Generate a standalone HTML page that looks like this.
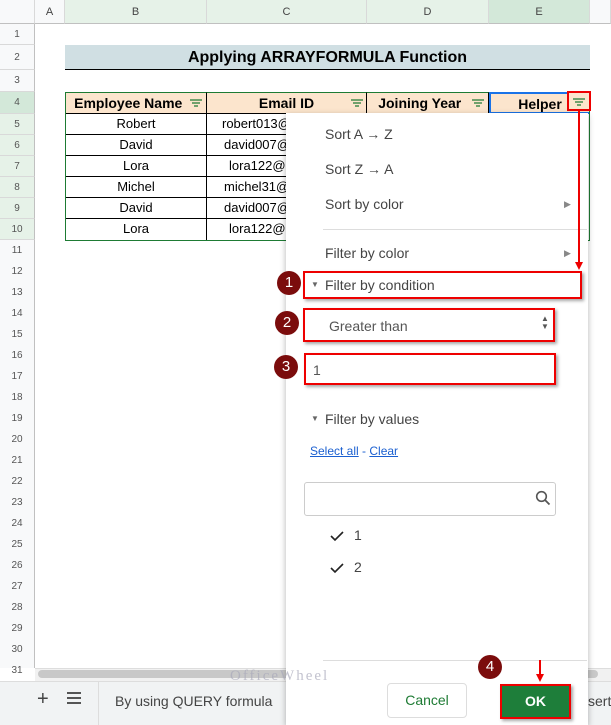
<!DOCTYPE html>
<html><head><style>
*{margin:0;padding:0;box-sizing:border-box}
body{width:611px;height:725px;overflow:hidden;background:#fff;font-family:"Liberation Sans",Arial,sans-serif;position:relative}
.a{position:absolute}
.ch{top:0;height:24px;background:#f8f9fa;border-right:1px solid #d9d9d9;border-bottom:1px solid #c0c0c0;font-size:11px;color:#444;text-align:center;line-height:24px}
.rh{left:0;width:35px;background:#f8f9fa;border-bottom:1px solid #d9d9d9;border-right:1px solid #c0c0c0;font-size:10px;color:#555;text-align:center}
.cell{border-right:1px solid #000;border-bottom:1px solid #000;font-size:13px;text-align:center;line-height:20px;color:#000}
.hd{background:#fce5cd;font-weight:bold;font-size:14px;line-height:21px}
.mi{left:325px;font-size:14px;color:#444}
.rb{border:2px solid #e00;box-shadow:2px 2px 3px rgba(0,0,0,.35)}
.num{width:24px;height:24px;border-radius:50%;background:#7b0c0c;color:#fff;font-size:15px;text-align:center;line-height:24px}
.flt{width:14px;height:9px}
</style></head><body>
<!-- column headers -->
<div class="a ch" style="left:0;width:35px"></div>
<div class="a ch" style="left:35px;width:30px">A</div>
<div class="a ch" style="left:65px;width:142px;background:#e6f2e8">B</div>
<div class="a ch" style="left:207px;width:160px;background:#e6f2e8">C</div>
<div class="a ch" style="left:367px;width:122px;background:#e6f2e8">D</div>
<div class="a ch" style="left:489px;width:101px;background:#d3e8d9">E</div>
<div class="a ch" style="left:590px;width:21px"></div>
<!-- row headers -->
<div class="a rh" style="top:24px;height:21px;line-height:21px">1</div>
<div class="a rh" style="top:45px;height:25px;line-height:25px;background:#f8f9fa">2</div>
<div class="a rh" style="top:70px;height:22px;line-height:22px">3</div>
<div class="a rh" style="top:92px;height:22px;line-height:22px;background:#d3e8d9">4</div>
<div class="a rh" style="top:114px;height:21px;line-height:21px;background:#e6f2e8">5</div>
<div class="a rh" style="top:135px;height:21px;line-height:21px;background:#e6f2e8">6</div>
<div class="a rh" style="top:156px;height:21px;line-height:21px;background:#e6f2e8">7</div>
<div class="a rh" style="top:177px;height:21px;line-height:21px;background:#e6f2e8">8</div>
<div class="a rh" style="top:198px;height:21px;line-height:21px;background:#e6f2e8">9</div>
<div class="a rh" style="top:219px;height:21px;line-height:21px;background:#e6f2e8">10</div>
<div class="a" style="left:0;top:240px;width:35px;height:428px;background:#f8f9fa;border-right:1px solid #c0c0c0;font-size:10px;color:#555;text-align:center;line-height:21px">11<br>12<br>13<br>14<br>15<br>16<br>17<br>18<br>19<br>20<br>21<br>22<br>23<br>24<br>25<br>26<br>27<br>28<br>29<br>30<br>31</div>
<!-- title -->
<div class="a" style="left:65px;top:45px;width:525px;height:25px;background:#d0dfe3;border-bottom:1px solid #000;font-weight:bold;font-size:16px;text-align:center;line-height:25px">Applying ARRAYFORMULA Function</div>
<!-- table -->
<div class="a" style="left:65px;top:92px;width:525px;height:149px;border:1px solid #1e7b34"></div>
<div class="a cell hd" style="left:66px;top:92px;width:141px;height:22px;border-top:1px solid #1e7b34">Employee Name&nbsp;&nbsp;&nbsp;&nbsp;</div>
<div class="a cell hd" style="left:207px;top:92px;width:160px;height:22px;border-top:1px solid #1e7b34">Email ID</div>
<div class="a cell hd" style="left:367px;top:92px;width:122px;height:22px;border-top:1px solid #1e7b34">Joining Year&nbsp;&nbsp;&nbsp;&nbsp;</div>
<div class="a cell hd" style="left:489px;top:92px;width:100px;height:22px;border:2px solid #1a73e8;border-right:none">Helper</div>
<svg class="a" style="left:189px;top:98px" width="14" height="10"><path d="M1 2h12M3 5h8M5 8h4" stroke="#1e7b34" stroke-width="1.3"/></svg>
<svg class="a" style="left:350px;top:98px" width="14" height="10"><path d="M1 2h12M3 5h8M5 8h4" stroke="#1e7b34" stroke-width="1.3"/></svg>
<svg class="a" style="left:471px;top:98px" width="14" height="10"><path d="M1 2h12M3 5h8M5 8h4" stroke="#1e7b34" stroke-width="1.3"/></svg>
<div class="a" style="left:567px;top:91px;width:24px;height:20px;border:2px solid #e00;background:#fce5cd"></div>
<svg class="a" style="left:572px;top:97px" width="14" height="10"><path d="M1 2h12M3 5h8M5 8h4" stroke="#1e7b34" stroke-width="1.3"/></svg>

<div class="a cell" style="left:66px;top:114px;width:141px;height:21px">Robert</div>
<div class="a cell" style="left:66px;top:135px;width:141px;height:21px">David</div>
<div class="a cell" style="left:66px;top:156px;width:141px;height:21px">Lora</div>
<div class="a cell" style="left:66px;top:177px;width:141px;height:21px">Michel</div>
<div class="a cell" style="left:66px;top:198px;width:141px;height:21px">David</div>
<div class="a cell" style="left:66px;top:219px;width:141px;height:21px;border-bottom:none">Lora</div>
<div class="a cell" style="left:207px;top:114px;width:160px;height:21px;text-align:left;padding-left:15px">robert013@</div>
<div class="a cell" style="left:207px;top:135px;width:160px;height:21px;text-align:left;padding-left:17px">david007@</div>
<div class="a cell" style="left:207px;top:156px;width:160px;height:21px;text-align:left;padding-left:22px">lora122@</div>
<div class="a cell" style="left:207px;top:177px;width:160px;height:21px;text-align:left;padding-left:17px">michel31@</div>
<div class="a cell" style="left:207px;top:198px;width:160px;height:21px;text-align:left;padding-left:17px">david007@</div>
<div class="a cell" style="left:207px;top:219px;width:160px;height:21px;text-align:left;padding-left:22px;border-bottom:none">lora122@</div>

<!-- scrollbar & footer -->
<div class="a" style="left:35px;top:668px;width:576px;height:13px;background:#f1f1f1;border-top:1px solid #ddd"></div>
<div class="a" style="left:38px;top:670px;width:560px;height:8px;background:#c8c8c8;border-radius:4px"></div>
<div class="a" style="left:0;top:681px;width:611px;height:44px;background:#f1f3f4;border-top:1px solid #ddd"></div>
<div class="a" style="left:37px;top:688px;font-size:20px;color:#444">+</div>
<div class="a" style="left:67px;top:692px;width:14px;height:12px;border-top:2px solid #555;border-bottom:2px solid #555"></div>
<div class="a" style="left:67px;top:697px;width:14px;height:2px;background:#555"></div>
<div class="a" style="left:98px;top:682px;width:1px;height:43px;background:#ddd"></div>
<div class="a" style="left:115px;top:693px;font-size:14px;color:#444">By using QUERY formula</div>
<div class="a" style="left:588px;top:693px;font-size:14px;color:#444">sert</div>

<!-- menu -->
<div class="a" style="left:286px;top:113px;width:302px;height:612px;background:#fff;box-shadow:0 2px 6px rgba(0,0,0,.3)"></div>
<div class="a mi" style="top:126px">Sort A → Z</div>
<div class="a mi" style="top:161px">Sort Z → A</div>
<div class="a mi" style="top:196px">Sort by color</div>
<div class="a" style="left:564px;top:199px;font-size:9px;color:#888">▶</div>
<div class="a" style="left:323px;top:229px;width:264px;height:1px;background:#ddd"></div>
<div class="a mi" style="top:245px">Filter by color</div>
<div class="a" style="left:564px;top:248px;font-size:9px;color:#888">▶</div>
<div class="a rb" style="left:303px;top:271px;width:279px;height:28px"></div>
<div class="a" style="left:311px;top:280px;font-size:8px;color:#666">▼</div>
<div class="a mi" style="top:277px">Filter by condition</div>
<div class="a rb" style="left:303px;top:308px;width:252px;height:34px"></div>
<div class="a" style="left:329px;top:318px;font-size:14px;color:#555">Greater than</div>
<div class="a" style="left:541px;top:315px;font-size:8px;color:#555;line-height:8px">▲<br>▼</div>
<div class="a rb" style="left:304px;top:353px;width:252px;height:32px"></div>
<div class="a" style="left:313px;top:362px;font-size:14px;color:#555">1</div>
<div class="a" style="left:311px;top:414px;font-size:8px;color:#666">▼</div>
<div class="a mi" style="top:411px">Filter by values</div>
<div class="a" style="left:310px;top:444px;font-size:12px;color:#1a5fd0"><u>Select all</u> - <u>Clear</u></div>
<div class="a" style="left:304px;top:482px;width:252px;height:34px;border:1px solid #ccc;border-radius:3px"></div>
<svg class="a" style="left:535px;top:490px" width="16" height="16"><circle cx="6.5" cy="6.5" r="4.8" fill="none" stroke="#555" stroke-width="1.6"/><path d="M10 10l4.5 4.5" stroke="#555" stroke-width="1.8"/></svg>
<svg class="a" style="left:330px;top:530px" width="14" height="12"><path d="M1 6l4 4 8-8" fill="none" stroke="#222" stroke-width="1.6"/></svg>
<div class="a" style="left:354px;top:527px;font-size:14px;color:#444">1</div>
<svg class="a" style="left:330px;top:562px" width="14" height="12"><path d="M1 6l4 4 8-8" fill="none" stroke="#222" stroke-width="1.6"/></svg>
<div class="a" style="left:354px;top:559px;font-size:14px;color:#444">2</div>
<div class="a" style="left:323px;top:660px;width:264px;height:1px;background:#ddd"></div>
<div class="a" style="left:230px;top:668px;font-family:'Liberation Serif',serif;font-size:15px;color:#aab;letter-spacing:2px;opacity:.7">OfficeWheel</div>
<div class="a" style="left:387px;top:683px;width:80px;height:35px;border:1px solid #ddd;border-radius:4px;background:#fff;text-align:center;line-height:33px;font-size:14px;color:#1e7b34">Cancel</div>
<div class="a rb" style="left:500px;top:684px;width:71px;height:35px;background:#1e7e3a;color:#fff;font-weight:bold;font-size:14px;text-align:center;line-height:31px">OK</div>

<!-- numbers -->
<div class="a num" style="left:277px;top:271px">1</div>
<div class="a num" style="left:275px;top:311px">2</div>
<div class="a num" style="left:274px;top:355px">3</div>
<div class="a num" style="left:478px;top:655px">4</div>
<!-- arrows -->
<div class="a" style="left:578px;top:110px;width:2px;height:155px;background:#e00"></div>
<div class="a" style="left:575px;top:262px;border-left:4px solid transparent;border-right:4px solid transparent;border-top:8px solid #e00"></div>
<div class="a" style="left:539px;top:660px;width:2px;height:17px;background:#e00"></div>
<div class="a" style="left:536px;top:674px;border-left:4px solid transparent;border-right:4px solid transparent;border-top:8px solid #e00"></div>
</body></html>
